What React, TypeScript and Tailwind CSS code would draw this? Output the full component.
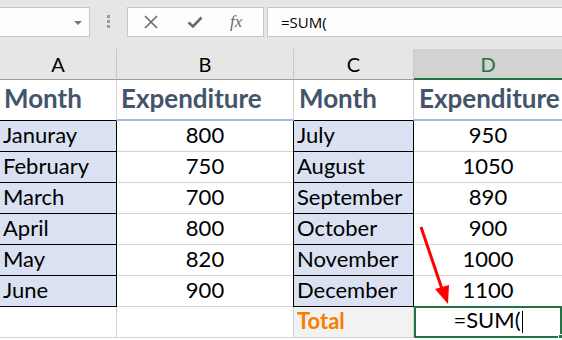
import React from 'react';

const rowsLeft = [
  ['Januray', '800'],
  ['February', '750'],
  ['March', '700'],
  ['April', '800'],
  ['May', '820'],
  ['June', '900'],
];

const rowsRight = [
  ['July', '950'],
  ['August', '1050'],
  ['September', '890'],
  ['October', '900'],
  ['November', '1000'],
  ['December', '1100'],
];

const font = { fontFamily: 'Lato, "Open Sans", sans-serif' };

export default function App() {
  return (
    <div className="relative w-[562px] h-[340px] overflow-hidden bg-white text-black" style={font}>
      {/* Formula bar */}
      <div className="h-[49px] bg-[#e6e6e6] flex items-start pt-[7px]">
        <div className="relative w-[90px] h-[30px] bg-[#fdfdfd] border border-[#c6c6c6] border-l-0">
          <div className="absolute left-[74px] top-[13px] w-0 h-0 border-l-[4px] border-r-[4px] border-t-[4px] border-l-transparent border-r-transparent border-t-[#777]" />
        </div>
        <div className="w-[37px] flex flex-col items-center gap-[2px] pt-[8px]">
          <span className="w-[3px] h-[3px] bg-[#9a9a9a]" />
          <span className="w-[3px] h-[3px] bg-[#9a9a9a]" />
          <span className="w-[3px] h-[3px] bg-[#9a9a9a]" />
        </div>
        <div className="w-[137px] h-[30px] bg-[#fdfdfd] border border-[#c6c6c6] flex items-center">
          <svg width="14" height="14" viewBox="0 0 14 14" className="ml-[16px]">
            <path d="M1 1 L13 13 M13 1 L1 13" stroke="#6a6a6a" strokeWidth="1.6" fill="none" />
          </svg>
          <svg width="16" height="14" viewBox="0 0 16 14" className="ml-[29px]">
            <path d="M1.5 7.5 L6 11.5 L14.5 2.5" stroke="#6a6a6a" strokeWidth="2.6" fill="none" />
          </svg>
          <span className="ml-[27px] text-[17px] italic text-[#6a6a6a]" style={{ fontFamily: '"Liberation Serif", serif' }}>
            fx
          </span>
        </div>
        <div className="ml-[3px] flex-1 h-[30px] bg-[#fdfdfd] border border-[#c6c6c6] border-r-0 flex items-center pl-[13px] text-[15px]" style={{ fontFamily: '"Open Sans", sans-serif' }}>
          =SUM(
        </div>
      </div>

      {/* Column headers */}
      <div className="flex h-[31px] bg-[#e6e6e6] text-[20px]">
        <div className="w-[117px] flex items-center justify-center border-r border-b border-r-[#c8c8c8] border-b-[#9d9d9d]">A</div>
        <div className="w-[177px] flex items-center justify-center border-r border-b border-r-[#c8c8c8] border-b-[#9d9d9d]">B</div>
        <div className="w-[120px] flex items-center justify-center border-r border-b border-r-[#c8c8c8] border-b-[#9d9d9d]">C</div>
        <div className="w-[148px] flex items-center justify-center bg-[#d2d2d2] text-[#217346] border-b-2 border-b-[#217346]">D</div>
      </div>

      {/* Heading row */}
      <div className="flex h-[41px] text-[26px] leading-none font-bold text-[#44546a]">
        <div className="w-[117px] flex items-end pb-[9px] pl-[4px] border-r border-r-[#d4d4d4] border-b border-b-black">Month</div>
        <div className="w-[177px] flex items-end pb-[8px] pl-[4px] border-r border-r-[#d4d4d4] border-b-2 border-b-[#a6b8de]">Expenditure</div>
        <div className="w-[120px] flex items-end pb-[9px] pl-[5px] border-r border-r-[#d4d4d4] border-b border-b-black">Month</div>
        <div className="w-[148px] flex items-end pb-[8px] pl-[5px] border-b-2 border-b-[#a6b8de]">Expenditure</div>
      </div>

      {/* Data rows */}
      {rowsLeft.map((l, i) => (
        <div key={i} className="flex h-[31px] text-[22px] leading-none">
          <div className="w-[117px] flex items-end pb-[5px] pl-[3px] bg-[#d9e1f2] border-r border-b border-black">{l[0]}</div>
          <div className="w-[177px] flex items-end justify-center pb-[5px] border-r border-b border-[#d4d4d4]">{l[1]}</div>
          <div className="w-[121px] -ml-px flex items-end pb-[5px] pl-[3px] bg-[#d9e1f2] border-l border-r border-b border-black">{rowsRight[i][0]}</div>
          <div className="w-[148px] flex items-end justify-center pb-[5px] border-b border-[#d4d4d4]">{rowsRight[i][1]}</div>
        </div>
      ))}

      {/* Total row */}
      <div className="flex h-[31px] text-[22px] leading-none">
        <div className="w-[117px] border-r border-b border-[#d4d4d4]" />
        <div className="w-[177px] border-r border-b border-[#d4d4d4]" />
        <div className="w-[120px] flex items-end pb-[5px] pl-[3px] bg-[#f2f2f2] border-r border-b border-[#d4d4d4] font-bold text-[#fa7d00]">Total</div>
        <div className="relative w-[148px] h-[32px] -mt-px flex items-end justify-center pb-[5px] border-2 border-[#217346]">
          <span>=SUM(</span>
          <span className="w-px h-[22px] bg-black ml-[1px] mb-[-2px]" />
          <span className="absolute -right-[3px] -bottom-[3px] w-[5px] h-[5px] bg-[#217346] border border-white" />
        </div>
      </div>

      {/* Red arrow */}
      <svg className="absolute left-0 top-0 pointer-events-none" width="562" height="340">
        <line x1="421" y1="227" x2="442" y2="289" stroke="#ff0000" strokeWidth="3" />
        <polygon points="448,304 435,289 449,285" fill="#ff0000" />
      </svg>
    </div>
  );
}
